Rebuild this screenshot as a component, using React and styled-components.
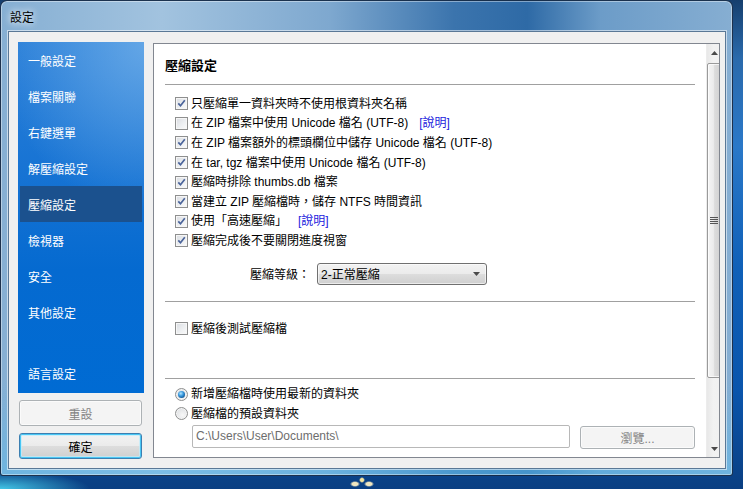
import React from 'react';
import styled, { createGlobalStyle } from 'styled-components';

const Global = createGlobalStyle`
  html, body { margin: 0; padding: 0; }
  body {
    width: 743px; height: 489px; overflow: hidden;
    font-family: "Liberation Sans", "Noto Sans CJK TC", sans-serif;
    font-size: 12px; color: #000;
  }
  * { box-sizing: border-box; }
`;

const Desktop = styled.div`
  width: 743px; height: 489px; overflow: hidden;
  display: flex; align-items: flex-start;
  background:
    radial-gradient(ellipse 5px 3px at 355px 484px, #efe6c0 0, #efe6c0 55%, rgba(239,230,192,0) 100%),
    radial-gradient(ellipse 5px 3px at 369px 484px, #efe6c0 0, #efe6c0 55%, rgba(239,230,192,0) 100%),
    radial-gradient(ellipse 3px 3px at 362px 480px, #f6e6a0 0, #f6e6a0 50%, rgba(246,230,160,0) 100%),
    radial-gradient(ellipse 90px 18px at 0px 489px, rgba(70,205,235,0.95), rgba(70,205,235,0) 100%),
    linear-gradient(180deg, #163f6e 0%, #2a6aac 12%, #2a78c8 30%, #0f60b8 55%, #0a55ac 80%, #0a3f82 100%);
`;

const Window = styled.div`
  width: 733px; height: 476px;
  border: 1px solid rgba(18, 36, 62, 0.9);
  border-radius: 7px 7px 3px 3px;
  padding: 0 6px 6px 7px;
  display: flex; flex-direction: column;
  background:
    linear-gradient(180deg, rgba(255,255,255,0) 0%, rgba(255,255,255,0) 80%, rgba(90,185,235,0.55) 100%),
    linear-gradient(90deg, #86afd3 0%, #a2c3df 22%, #7ea8cf 45%, #3b74ad 62%, #2e6aa6 72%, #6c9cc8 82%, #86aed2 100%);
  box-shadow: inset 0 0 0 1px rgba(255, 255, 255, 0.4);
`;

const TitleBar = styled.div`
  height: 30px; display: flex; align-items: center;
  padding-left: 2px;
`;

const TitleText = styled.span`
  font-size: 12px; color: #000;
  text-shadow: 0 0 6px rgba(255,255,255,0.9), 0 0 10px rgba(255,255,255,0.7);
`;

const Client = styled.div`
  flex: 1;
  background: #f0f0f0;
  border: 1px solid #5a7896;
  box-shadow: 0 0 0 1px rgba(255,255,255,0.55);
  display: grid;
  grid-template-columns: 126px 1fr;
  column-gap: 9px;
  padding: 10px 5px 9px 9px;
  min-height: 0;
`;

const LeftColumn = styled.div`
  display: flex; flex-direction: column; gap: 7px;
`;

const Sidebar = styled.nav`
  flex: 1;
  display: flex; flex-direction: column;
  padding-bottom: 2px;
  background:
    radial-gradient(ellipse 150px 170px at 130px 0px, rgba(120, 180, 235, 0.75), rgba(120, 180, 235, 0) 100%),
    linear-gradient(180deg, #2a7fd8 0%, #1874d4 35%, #056ad0 65%, #006bd3 100%);
`;

const NavItem = styled.div`
  height: 36px; flex-shrink: 0;
  margin: 0 2px;
  padding-left: 8px;
  display: flex; align-items: center;
  color: #fff; font-size: 12px;
  background: ${p => (p.$active ? '#1b518e' : 'transparent')};
  margin-top: ${p => (p.$bottom ? 'auto' : '0')};
`;

const PushButton = styled.button`
  height: ${p => p.$h || '26px'};
  width: ${p => p.$w || 'auto'};
  margin: ${p => p.$m || '0'};
  flex-shrink: 0;
  font-family: inherit; font-size: 12px;
  border-radius: 3px;
  color: ${p => (p.disabled ? '#838383' : '#000')};
  border: 1px solid ${p => (p.disabled ? '#adb2b5' : p.$default ? '#3c7fb1' : '#707070')};
  background: ${p =>
    p.disabled
      ? '#f4f4f4'
      : 'linear-gradient(180deg, #f2f2f2 0%, #ebebeb 50%, #dddddd 51%, #cfcfcf 100%)'};
  box-shadow: ${p => (p.$default ? 'inset 0 0 0 1px #48c6f4, inset 0 0 0 2px rgba(190,236,252,0.7)' : 'inset 0 0 0 1px rgba(255,255,255,0.6)')};
  padding: 0;
`;

const Panel = styled.section`
  margin: 1px 0 1px 0;
  border: 1px solid #828790;
  background: #fff;
  display: flex;
  min-height: 0;
  overflow: hidden;
`;

const PanelBody = styled.div`
  flex: 1;
  padding: 0 11px;
  display: flex; flex-direction: column;
`;

const Heading = styled.h2`
  margin: 0;
  padding-top: 14px;
  font-size: 13px; font-weight: bold; line-height: 16px;
  height: 30px;
`;

const Divider = styled.div`
  height: 1px; background: #a0a0a0; flex-shrink: 0;
  margin-top: ${p => p.$mt || 0}px;
`;

const OptionList = styled.div`
  display: flex; flex-direction: column;
  margin-top: ${p => p.$mt || 0}px;
  padding-left: 10px;
`;

const OptionRow = styled.div`
  height: 19.6px;
  display: flex; align-items: center;
  white-space: nowrap;
`;

const Label = styled.span`
  margin-left: 3px; line-height: 16px;
`;

const HelpLink = styled.span`
  margin-left: 11px; color: #2222dd; line-height: 16px;
`;

const CheckBoxBox = styled.span`
  width: 13px; height: 13px; flex-shrink: 0;
  border: 1px solid #8e8f8f;
  background: linear-gradient(135deg, #d9dce1 0%, #eef0f2 60%, #fafafa 100%);
  box-shadow: inset 0 0 0 1px #f6f6f6;
  display: flex; align-items: center; justify-content: center;
`;

const Check = ({ checked }) => (
  <CheckBoxBox>
    {checked && (
      <svg width="9" height="9" viewBox="0 0 9 9">
        <path d="M1.3 4.4 L3.5 6.8 L7.8 1.3" fill="none" stroke="#4a639a" strokeWidth="1.7" />
      </svg>
    )}
  </CheckBoxBox>
);

const RadioCircle = styled.span`
  width: 13px; height: 13px; flex-shrink: 0;
  border-radius: 50%;
  border: 1px solid #8e8f8f;
  background: radial-gradient(circle at 60% 65%, #f8f8f8 0%, #e4e6e8 60%, #d0d3d8 100%);
  box-shadow: inset 0 0 0 1px #f4f4f4;
  display: flex; align-items: center; justify-content: center;
`;

const RadioDot = styled.span`
  width: 7px; height: 7px; border-radius: 50%;
  background: radial-gradient(circle at 40% 35%, #b4e6ff 0%, #3a9ade 40%, #135a98 75%, #0b3f72 100%);
`;

const Radio = ({ on }) => <RadioCircle>{on && <RadioDot />}</RadioCircle>;

const LevelRow = styled.div`
  margin-top: 12px; height: 22px;
  display: flex; align-items: center;
  padding-left: 85px;
`;

const LevelLabel = styled.span`
  width: 60px; margin-right: 7px;
`;

const Combo = styled.div`
  width: 170px; height: 22px;
  border: 1px solid #707070; border-radius: 3px;
  background: linear-gradient(180deg, #f2f2f2 0%, #ebebeb 50%, #dddddd 51%, #cfcfcf 100%);
  box-shadow: inset 0 0 0 1px rgba(255,255,255,0.6);
  display: flex; align-items: center; justify-content: space-between;
  padding: 0 6px 0 3px;
`;

const PathRow = styled.div`
  margin-top: 1px; padding-left: 27px;
  display: flex; align-items: flex-start;
`;

const PathInput = styled.div`
  width: 378px; height: 23px; flex-shrink: 0;
  border: 1px solid #b8b8b8; border-radius: 2px;
  background: #fff;
  color: #6d6d6d;
  padding-left: 3px;
  display: flex; align-items: center;
`;

const Scrollbar = styled.div`
  width: 17px; flex-shrink: 0;
  display: flex; flex-direction: column;
  background: linear-gradient(90deg, #e8e8e8 0%, #f2f2f2 40%, #f0f0f0 100%);
  border-left: 1px solid #ececec;
`;

const ScrollArrow = styled.div`
  height: 17px; flex-shrink: 0;
  display: flex; align-items: center; justify-content: center;
  padding-right: 2px;
`;

const ScrollThumb = styled.div`
  height: 315px; margin: 2px 2px 0 0;
  border: 1px solid #9a9a9a; border-radius: 2px;
  background: linear-gradient(90deg, #f4f4f4 0%, #ececec 45%, #dcdcdc 55%, #d2d2d2 100%);
  box-shadow: inset 0 0 0 1px rgba(255,255,255,0.7);
  display: flex; align-items: center; justify-content: center;
`;

const ScrollTrack = styled.div`
  flex: 1;
`;

const Arrow = ({ up }) => (
  <svg width="7" height="4" viewBox="0 0 7 4">
    <path d={up ? 'M0 4 L3.5 0 L7 4 Z' : 'M0 0 L7 0 L3.5 4 Z'} fill="#4a4a4a" />
  </svg>
);

const Gripper = () => (
  <svg width="8" height="8" viewBox="0 0 8 8">
    {[0, 2, 4, 6].map(y => (
      <rect key={y} x="0" y={y} width="8" height="1" fill="#555" />
    ))}
  </svg>
);

const navItems = ['一般設定', '檔案關聯', '右鍵選單', '解壓縮設定', '壓縮設定', '檢視器', '安全', '其他設定'];

const options = [
  { label: '只壓縮單一資料夾時不使用根資料夾名稱', checked: true },
  { label: '在 ZIP 檔案中使用 Unicode 檔名 (UTF-8)', checked: false, help: true },
  { label: '在 ZIP 檔案額外的標頭欄位中儲存 Unicode 檔名 (UTF-8)', checked: true },
  { label: '在 tar, tgz 檔案中使用 Unicode 檔名 (UTF-8)', checked: true },
  { label: '壓縮時排除 thumbs.db 檔案', checked: true },
  { label: '當建立 ZIP 壓縮檔時，儲存 NTFS 時間資訊', checked: true },
  { label: '使用「高速壓縮」', checked: true, help: true },
  { label: '壓縮完成後不要關閉進度視窗', checked: true },
];

export default function App() {
  return (
    <>
      <Global />
      <Desktop>
        <Window>
          <TitleBar>
            <TitleText>設定</TitleText>
          </TitleBar>
          <Client>
            <LeftColumn>
              <Sidebar>
                {navItems.map(n => (
                  <NavItem key={n} $active={n === '壓縮設定'}>{n}</NavItem>
                ))}
                <NavItem $bottom>語言設定</NavItem>
              </Sidebar>
              <PushButton disabled $w="123px" $m="0 2px 0 1px">重設</PushButton>
              <PushButton $default $w="123px" $m="0 2px 0 1px">確定</PushButton>
            </LeftColumn>
            <Panel>
              <PanelBody>
                <Heading>壓縮設定</Heading>
                <Divider $mt={10} />
                <OptionList $mt={9}>
                  {options.map(o => (
                    <OptionRow key={o.label}>
                      <Check checked={o.checked} />
                      <Label>{o.label}</Label>
                      {o.help && <HelpLink>[說明]</HelpLink>}
                    </OptionRow>
                  ))}
                </OptionList>
                <LevelRow>
                  <LevelLabel>壓縮等級：</LevelLabel>
                  <Combo>
                    <span>2-正常壓縮</span>
                    <Arrow />
                  </Combo>
                </LevelRow>
                <Divider $mt={16} />
                <OptionList $mt={17}>
                  <OptionRow>
                    <Check checked={false} />
                    <Label>壓縮後測試壓縮檔</Label>
                  </OptionRow>
                </OptionList>
                <Divider $mt={40} />
                <OptionList $mt={5}>
                  <OptionRow>
                    <Radio on />
                    <Label>新增壓縮檔時使用最新的資料夾</Label>
                  </OptionRow>
                  <OptionRow>
                    <Radio />
                    <Label>壓縮檔的預設資料夾</Label>
                  </OptionRow>
                </OptionList>
                <PathRow>
                  <PathInput>C:\Users\User\Documents\</PathInput>
                  <PushButton disabled $w="115px" $h="23px" $m="1px 0 0 10px">瀏覽...</PushButton>
                </PathRow>
              </PanelBody>
              <Scrollbar>
                <ScrollArrow><Arrow up /></ScrollArrow>
                <ScrollThumb><Gripper /></ScrollThumb>
                <ScrollTrack />
                <ScrollArrow><Arrow /></ScrollArrow>
              </Scrollbar>
            </Panel>
          </Client>
        </Window>
      </Desktop>
    </>
  );
}
